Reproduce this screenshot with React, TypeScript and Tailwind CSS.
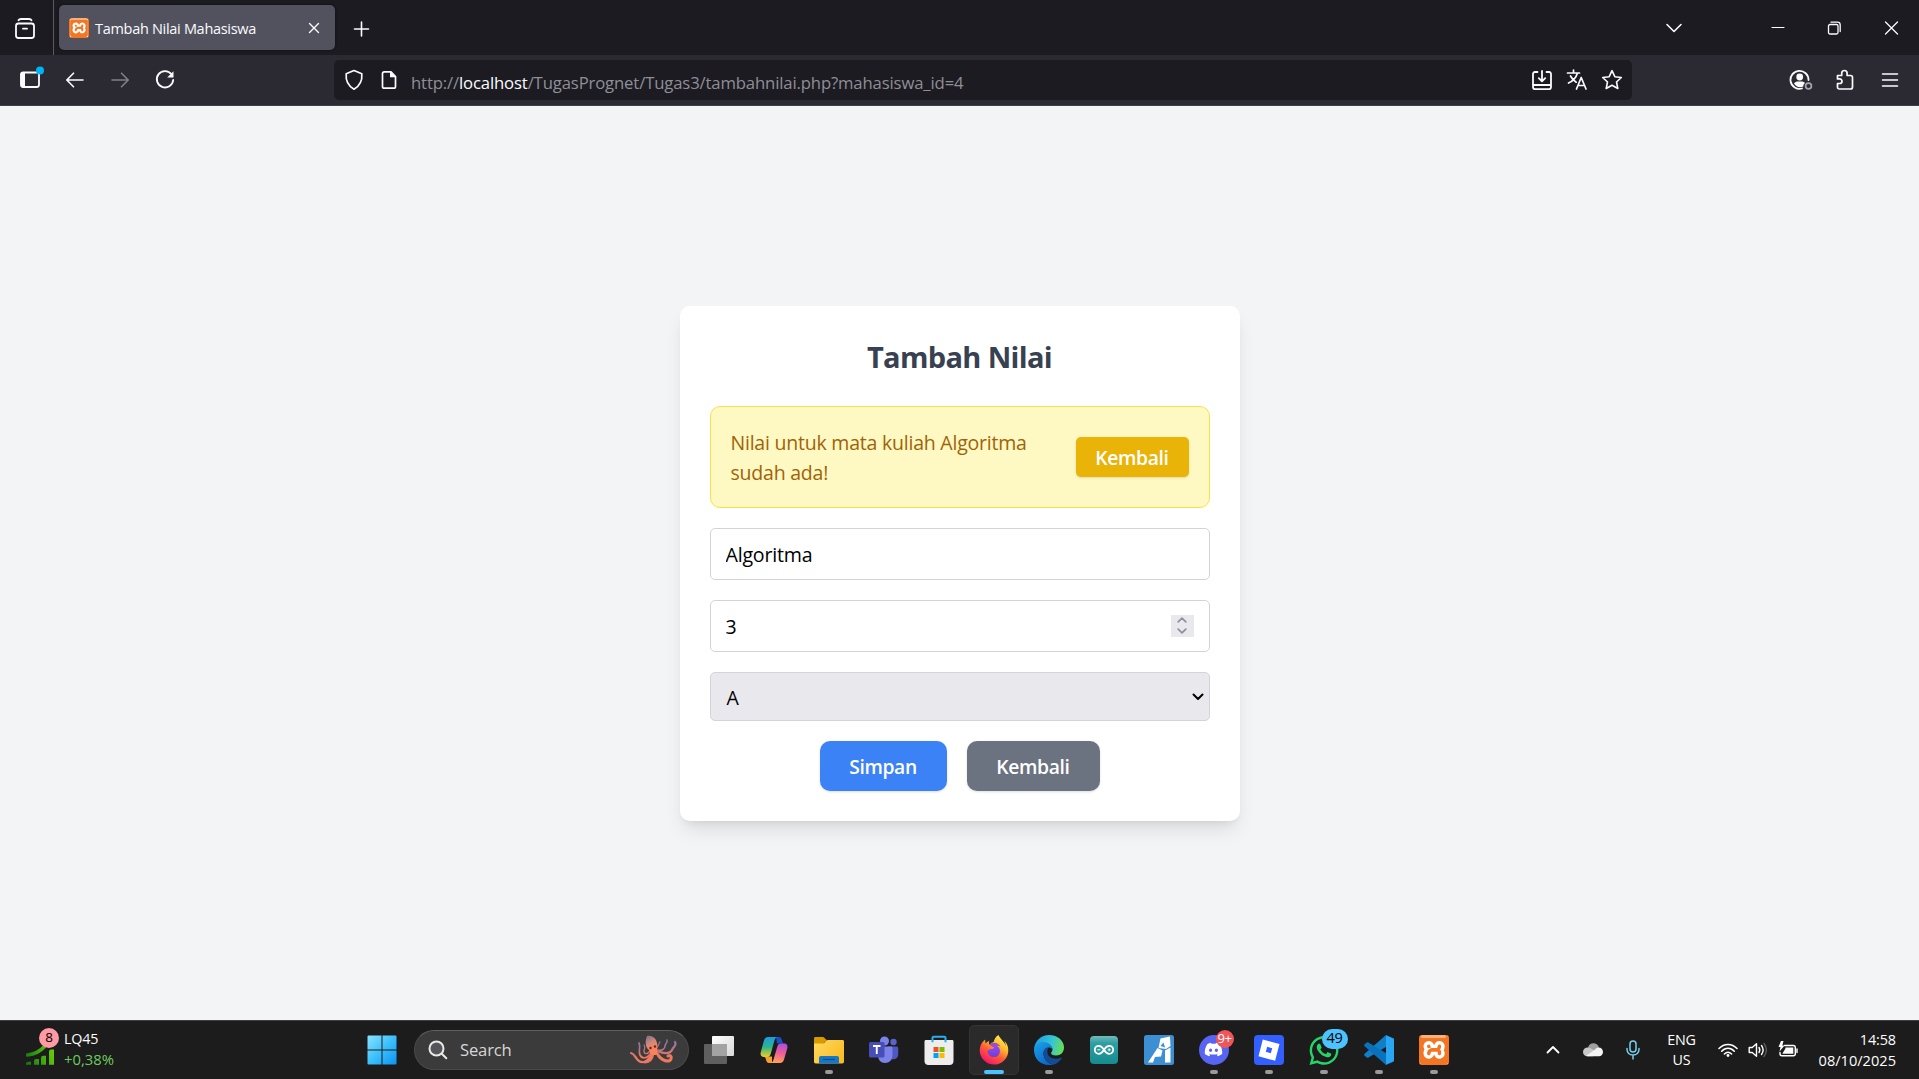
import type { ReactNode } from "react";
import { FaDiscord, FaFirefoxBrowser, FaWhatsapp } from "react-icons/fa";
import { SiXampp } from "react-icons/si";

function Stroke({ w, h, sw = 1.6, className = "", children }: { w: number; h: number; sw?: number; className?: string; children: ReactNode }) {
  return (
    <svg width={w} height={h} viewBox={`0 0 ${w} ${h}`} fill="none" stroke="currentColor" strokeWidth={sw} strokeLinecap="round" strokeLinejoin="round" className={"block shrink-0 " + className}>
      {children}
    </svg>
  );
}

function Xampp({ className }: { className: string }) {
  return (
    <span className={"relative block rounded-[3px] bg-[#f37623] p-px " + className}>
      <span className="block size-full bg-white p-px">
        <SiXampp className="size-full scale-[1.12] text-[#f37623]" />
      </span>
      <span className="absolute inset-x-[8%] top-[3%] h-[10%] rounded-sm bg-[#f9b07c]" />
    </span>
  );
}

function TabBar() {
  return (
    <div className="flex h-[55px] bg-[#1c1b22] text-[#fbfbfe]">
      <div className="flex w-[54px] items-center border-r border-[#5b5a63] pl-[14px]">
        <Stroke w={22} h={22} sw={1.8} className="mt-[2px]">
          <path d="M4.5 2.2C5 1.3 6 1 7 1h8c1 0 2 .3 2.500 1.200" />
          <rect x="2" y="5.500" width="18" height="14.500" rx="2.500" />
          <path d="M9 10.700h4" />
        </Stroke>
      </div>
      <div className="ml-[5px] mt-[5px] flex h-[45px] w-[276px] items-center rounded-[5px] bg-[#52525e] pl-[10px] shadow-[0_0_3px_rgba(0,0,0,0.6)]">
        <Xampp className="size-5" />
        <span className="ml-[6px] flex-1 pt-[2px] text-[14.500px] tracking-[-0.300px]">Tambah Nilai Mahasiswa</span>
        <Stroke w={12} h={12} sw={1.4} className="mr-[15px]">
          <path d="M1.500 1.500l9 9M10.500 1.500l-9 9" />
        </Stroke>
      </div>
      <div className="ml-[18px] flex items-center">
        <Stroke w={17} h={16} className="mt-[3px]">
          <path d="M8.500 1v14M1.500 8h14" />
        </Stroke>
      </div>
      <div className="ml-auto flex items-center pr-[20px]">
        <Stroke w={18} h={12} className="mr-[88px]">
          <path d="M2 2.500l7 7 7-7" />
        </Stroke>
        <Stroke w={14} h={14} sw={1.2} className="mr-[42px]">
          <path d="M1 6.500h12" />
        </Stroke>
        <Stroke w={15} h={14} sw={1.3} className="mr-[42px]">
          <rect x="1.500" y="3.500" width="9.500" height="9.500" rx="1.500" />
          <path d="M4 1.200h6.500c1.700 0 2.700 1 2.700 2.700V10.500" />
        </Stroke>
        <Stroke w={15} h={14} sw={1.3} className="mt-px">
          <path d="M1.500 1l12 12M13.500 1l-12 12" />
        </Stroke>
      </div>
    </div>
  );
}

function NavBar() {
  return (
    <div className="flex h-[51px] items-center border-b border-[#3f3e46] bg-[#2b2a33] text-[#fbfbfe]">
      <div className="ml-[19px] flex w-[300px] items-center">
        <Stroke w={28} h={26} sw={1.8} className="-mt-[3px]">
          <rect x="2" y="6.500" width="18" height="14.500" rx="2.200" />
          <path d="M1.500 8.500C1.500 7 2.500 6 4 6h2v15.500H4c-1.500 0-2.500-1-2.500-2.500z" fill="currentColor" stroke="none" />
          <circle cx="21" cy="4.500" r="4" fill="#00b3f4" stroke="none" />
        </Stroke>
        <Stroke w={20} h={18} className="ml-[18px]">
          <path d="M18 9H2M8.500 2.200L1.800 9l6.700 6.800" />
        </Stroke>
        <Stroke w={20} h={18} className="ml-[25px] text-[#807f88]">
          <path d="M2 9h16M11.500 2.200L18.200 9l-6.700 6.800" />
        </Stroke>
        <Stroke w={20} h={20} sw={1.8} className="ml-[25px]">
          <path d="M16.500 4.200A8.200 8.200 0 1 0 18.200 10" />
          <path d="M18.500 1.200v6.300h-6.300z" fill="currentColor" stroke="none" />
        </Stroke>
      </div>
      <div className="ml-[15px] flex h-10 w-[1298px] items-center rounded-[5px] bg-[#1c1b22] pl-[10px] pr-[9px]">
        <Stroke w={20} h={22} sw={1.7}>
          <path d="M10 1.500l7.800 3.300c.6 6.300-1.600 11.700-7.800 15.400C3.800 16.500 1.600 11.100 2.200 4.800z" />
        </Stroke>
        <Stroke w={18} h={20} sw={1.7} className="ml-4">
          <path d="M11 1.800H4.300c-1 0-1.800.8-1.800 1.800v12.800c0 1 .8 1.800 1.800 1.800h9.400c1 0 1.800-.8 1.800-1.800V6.500z" />
          <path d="M10 1l6.300 6.300H10z" fill="currentColor" stroke="none" />
        </Stroke>
        <span className="ml-[13px] flex-1 pt-[5px] text-[16.700px] tracking-[-0.140px] text-[#8f8f96]">
          http://<span className="text-[#fbfbfe]">localhost</span>/TugasPrognet/Tugas3/tambahnilai.php?mahasiswa_id=4
        </span>
        <Stroke w={22} h={22} sw={1.8} className="mt-px">
          <path d="M6.500 2H4C2.700 2 2 2.700 2 4v13c0 1.500.8 2.200 2.200 2.200h13.600c1.400 0 2.200-.7 2.200-2.200V4c0-1.300-.7-2-2-2h-2.500M2 15h18M11 1v10M7.800 8.200L11 11.400l3.200-3.200" />
        </Stroke>
        <Stroke w={22} h={22} sw={1.7} className="ml-[13px]">
          <path d="M1.500 4h12M7.500 1v3M11.500 4C10.300 8 7 12 2.500 14M4.500 7c1.300 2.500 3.200 4.700 5.700 6.200M10.500 20l4.700-11.500L20 20M12.200 16.500h6.300" />
        </Stroke>
        <Stroke w={22} h={22} sw={1.6} className="ml-[13px]">
          <path d="M11 1.700l2.800 6 6.500.8-4.800 4.500 1.300 6.500L11 16.300l-5.800 3.200L6.500 13 1.700 8.500l6.500-.8z" />
        </Stroke>
      </div>
      <div className="ml-auto flex items-center pr-[19px]">
        <Stroke w={25} h={22} sw={1.8}>
          <path d="M19.500 11A9 9 0 1 0 13 19.500" />
          <circle cx="10.700" cy="8" r="3.400" fill="currentColor" stroke="none" />
          <path d="M5 14.500c1-1.500 2.500-2 4-2h3.500c1.500 0 2.500.5 3.500 1.500-1.200 1-1.700 2-1.700 3.500-3.800 1.600-7.300.2-9.300-3z" fill="currentColor" stroke="none" />
          <circle cx="19.500" cy="17" r="2.900" stroke="#a5a4ac" strokeWidth="1.700" />
        </Stroke>
        <Stroke w={20} h={22} sw={1.7} className="ml-[21px]">
          <path d="M2.500 6.500h4.200V4.200a2.700 2.700 0 0 1 5.400 0v2.300h3.400c1.300 0 2 .7 2 2v9.500c0 1.300-.7 2-2 2h-11c-1.300 0-2-.7-2-2v-3.500h2.200a2.300 2.300 0 0 0 0-4.600H2.500z" />
        </Stroke>
        <Stroke w={18} h={16} sw={1.5} className="ml-[26px] mr-px">
          <path d="M1.500 2h15M1.500 8h15M1.500 14h15" />
        </Stroke>
      </div>
    </div>
  );
}

function FormCard() {
  return (
    <div className="h-[515px] w-[560px] rounded-[10px] bg-white p-[30px] shadow-[0_12px_19px_-4px_rgba(0,0,0,0.1),0_5px_8px_-5px_rgba(0,0,0,0.1)]">
      <h2 className="mb-[29px] pt-px text-center text-[29px] font-bold leading-10 tracking-[-0.650px] text-[#374151]">Tambah Nilai</h2>
      <div className="mb-5 flex items-center justify-between rounded-[10px] border border-[#fde047] bg-[#fef9c3] px-5 pb-[19px] pt-[21px]">
        <p className="w-[310px] text-[19.500px] leading-[30px] tracking-[-0.220px] text-[#a16207]">Nilai untuk mata kuliah Algoritma sudah ada!</p>
        <button className="-mt-px h-10 w-[113px] rounded-[5px] bg-[#eab308] pt-[3px] text-[19.300px] font-semibold tracking-[-0.350px] text-white shadow">Kembali</button>
      </div>
      <form className="flex flex-col gap-5">
        <input defaultValue="Algoritma" className="h-[52px] rounded-[5px] border border-[#d1d5db] px-[15px] pt-[2px] text-[19.600px] tracking-[-0.200px] text-black" />
        <div className="flex h-[52px] items-center rounded-[5px] border border-[#d1d5db] px-[15px]">
          <input defaultValue="3" className="min-w-0 flex-1 pt-[3px] text-[19.500px] text-black" />
          <span className="flex h-[22px] w-[23px] flex-col items-center justify-center gap-[5px] bg-[#e9e9ed] text-[#8f8f9d]">
            <Stroke w={10} h={6} sw={1.7}>
              <path d="M1.200 4.800L5 1.200l3.800 3.600" />
            </Stroke>
            <Stroke w={10} h={6} sw={1.7}>
              <path d="M1.200 1.200L5 4.800l3.800-3.600" />
            </Stroke>
          </span>
        </div>
        <div className="flex h-[49px] items-center justify-between rounded-[5px] border border-[#d1d5db] bg-[#e9e9ed] pl-[16px] pr-[5px] text-[19.500px] text-black">
          <span className="pt-[4px]">A</span>
          <Stroke w={12} h={8} sw={2} className="mt-[2px]">
            <path d="M1.500 1.500L6 6l4.500-4.500" />
          </Stroke>
        </div>
        <div className="flex justify-center gap-5">
          <button className="h-[50px] w-[127px] rounded-[10px] bg-[#3b82f6] pt-[3px] text-[19.300px] font-semibold tracking-[-0.350px] text-white shadow">Simpan</button>
          <button className="h-[50px] w-[133px] rounded-[10px] bg-[#6b7280] pt-[3px] text-[19.300px] font-semibold tracking-[-0.350px] text-white shadow">Kembali</button>
        </div>
      </form>
    </div>
  );
}

function Octopus() {
  return (
    <svg width="48" height="30" viewBox="0 0 48 30" fill="none" strokeLinecap="round" className="block">
      <defs>
        <linearGradient id="arm" x1="0" y1="0" x2="0" y2="30" gradientUnits="userSpaceOnUse">
          <stop offset="0" stopColor="#6f78b8" />
          <stop offset="0.45" stopColor="#b0748e" />
          <stop offset="0.75" stopColor="#f27a5c" />
          <stop offset="1" stopColor="#e8746a" />
        </linearGradient>
        <linearGradient id="head" x1="17" y1="1" x2="26" y2="18" gradientUnits="userSpaceOnUse">
          <stop offset="0" stopColor="#8d6f86" />
          <stop offset="0.4" stopColor="#c98a80" />
          <stop offset="0.6" stopColor="#ff8052" />
        </linearGradient>
      </defs>
      <g stroke="url(#arm)">
        <path d="M22 18C19 26 13 29 9 26 5 23 5 19 1 18" strokeWidth="2.200" />
        <path d="M21 18C17 24 12 24 10 20 8 16 11 12 9 8" strokeWidth="1.700" />
        <path d="M20 16c-3 4-6 3-6 0s2-3 0-6" strokeWidth="1.300" />
        <path d="M23 18c-1 6-4 9-8 9" strokeWidth="3" />
        <path d="M27 18c4 8 12 10 14 6 1-3-1-4-3-3" strokeWidth="3" />
        <path d="M28 16c6 3 12 3 14-1 2-5 5-4 3-8" strokeWidth="2.200" />
        <path d="M27 15c5 1 8-1 8-4s3-3 2-6" strokeWidth="1.500" />
        <path d="M26 13c3-1 2-4 4-6" strokeWidth="1.200" />
      </g>
      <path d="M17 1c5-1 9 2 10 7 1 4 0 6 0 8 1 2 1 3-1 4h-4c-2-1-2-3-3-5-4-3-4-9-2-14z" fill="url(#head)" />
      <circle cx="20.500" cy="13" r="1.200" fill="#33315a" />
      <circle cx="25" cy="11.500" r="1.200" fill="#33315a" />
    </svg>
  );
}

function Task({ children, mark = true, active = false }: { children: ReactNode; mark?: boolean; active?: boolean }) {
  return (
    <div className="relative flex h-[59px] w-[55px] items-center justify-center">
      <div className={active ? "flex size-[50px] items-center justify-center rounded-[5px] border border-[#343434] bg-[#2a2a2a]" : "flex size-[50px] items-center justify-center"}>{children}</div>
      {active ? (
        <span className="absolute bottom-[5px] left-[18px] h-1 w-5 rounded-full bg-[#4cc2ff]" />
      ) : mark ? (
        <span className="absolute bottom-[5px] left-[24px] h-1 w-2 rounded-full bg-[#9a9a9a]" />
      ) : null}
    </div>
  );
}

function Art({ children }: { children: ReactNode }) {
  return (
    <svg width="30" height="30" viewBox="0 0 30 30" fill="none" className="block">
      {children}
    </svg>
  );
}

function TaskIcons() {
  return (
    <div className="ml-0.5 flex">
      <Task mark={false}>
        <Art>
          <defs>
            <linearGradient id="tv" x1="8" y1="1" x2="30" y2="21" gradientUnits="userSpaceOnUse"><stop stopColor="#fff" /><stop offset="1" stopColor="#d8d8d8" /></linearGradient>
          </defs>
          <rect x="8" y="1" width="22" height="20" rx="1" fill="url(#tv)" />
          <rect x="0" y="9" width="23" height="20" rx="1" fill="#5f5f5f" />
          <rect x="8" y="9" width="15" height="12" fill="#a3a3a3" />
        </Art>
      </Task>
      <Task mark={false}>
        <Art>
          <defs>
            <linearGradient id="cp1" x1="6" y1="2" x2="6" y2="22" gradientUnits="userSpaceOnUse"><stop stopColor="#1c9be8" /><stop offset=".5" stopColor="#2fb38a" /><stop offset="1" stopColor="#f0cf27" /></linearGradient>
            <linearGradient id="cp2" x1="24" y1="8" x2="20" y2="28" gradientUnits="userSpaceOnUse"><stop stopColor="#a34fe3" /><stop offset=".5" stopColor="#ee5c98" /><stop offset="1" stopColor="#ffa05a" /></linearGradient>
          </defs>
          <path d="M17 2h3c2 0 2.500 1.500 3.200 4 .6 2 1.200 2.500 2.800 2.500h-8z" fill="#1550c4" />
          <path d="M13 28h-3c-2 0-2.500-1.500-3.200-4-.5-1.800-1.200-2.500-2.800-2.500h9z" fill="#f4a130" />
          <path d="M9 2h10c-2 0-3 1.500-3.700 4l-3.500 12.500c-.7 2.500-1.800 3.500-3.800 3.500H5c-3 0-4-2-3.200-5l3-11C5.500 3.500 6.800 2 9 2z" fill="url(#cp1)" />
          <path d="M21 28H11c2 0 3-1.500 3.700-4l3.500-12c.7-2.500 1.800-3.500 3.800-3.500h3c3 0 4 2 3.200 5l-3 10.500c-.7 2.500-2 4-4.200 4z" fill="url(#cp2)" />
        </Art>
      </Task>
      <Task>
        <Art>
          <defs>
            <linearGradient id="fd" x1="0" y1="5" x2="30" y2="29" gradientUnits="userSpaceOnUse"><stop stopColor="#ffda5e" /><stop offset="1" stopColor="#f9b81c" /></linearGradient>
          </defs>
          <path d="M0 3.500C0 2.500.7 2 1.500 2H9c1.500 0 2.500 3 4 3l-4 4H0z" fill="#d99a00" />
          <path d="M0 8.500h9c2 0 2.500-3.500 5-3.500h14.500c1 0 1.500.6 1.500 1.500v20c0 1.200-.6 2-1.800 2H1.800C.6 28.500 0 27.700 0 26.500z" fill="url(#fd)" />
          <path d="M5 28.500V23c0-1.200.8-2 2-2h16c1.200 0 2 .8 2 2v5.500z" fill="#1577c8" />
          <path d="M9 24.500h12" stroke="#0c4a87" strokeWidth="1.200" />
        </Art>
      </Task>
      <Task mark={false}>
        <Art>
          <circle cx="24.500" cy="7" r="3.200" fill="#5b62c8" />
          <path d="M19 11.500h8.500c1 0 1.700.7 1.700 1.700v6c0 3-2 5-5.200 5H19z" fill="#4f57c0" />
          <circle cx="15.500" cy="6" r="4.500" fill="#7b83eb" />
          <path d="M9 11.500h13c1 0 1.500.6 1.500 1.500v7c0 5-3.300 8-7.500 8s-7-3-7-8z" fill="#7b83eb" />
          <rect x="0" y="7" width="15.500" height="15.500" rx="1.500" fill="#464eb8" />
          <path d="M4 11h7.500M7.750 11v8" stroke="#fff" strokeWidth="1.900" />
        </Art>
      </Task>
      <Task mark={false}>
        <Art>
          <path d="M8.500 7V2.800c0-.7.400-1.100 1.100-1.100h10.800c.7 0 1.100.4 1.100 1.100V7" stroke="#29aef0" strokeWidth="2" />
          <path d="M.5 6.500C.5 5.700 1 5 2 5h26c1 0 1.500.7 1.500 1.500V26c0 2.500-1.500 4-4 4h-21c-2.500 0-4-1.500-4-4z" fill="#ededed" />
          <path d="M8.500 5v2.300M21.500 5v2.300" stroke="#29aef0" strokeWidth="2" />
          <rect x="9.500" y="12" width="5" height="5" fill="#f25022" />
          <rect x="15.500" y="12" width="5" height="5" fill="#7fba00" />
          <rect x="9.500" y="18" width="5" height="5" fill="#00a4ef" />
          <rect x="15.500" y="18" width="5" height="5" fill="#ffb900" />
        </Art>
      </Task>
      <Task active>
        <svg width="0" height="0" className="absolute">
          <linearGradient id="ff" x1="0.800" y1="0.050" x2="0.250" y2="0.950">
            <stop offset="0" stopColor="#fff14d" /><stop offset=".35" stopColor="#ffb02e" /><stop offset=".6" stopColor="#ff5f36" /><stop offset="1" stopColor="#f5156c" />
          </linearGradient>
        </svg>
        <span className="relative flex size-[30px] items-center justify-center">
          <span className="absolute left-[8px] top-[8px] size-[14px] rounded-full bg-gradient-to-b from-[#a24bea] to-[#6a3fe0]" />
          <FaFirefoxBrowser className="relative size-[30px]" fill="url(#ff)" />
        </span>
      </Task>
      <Task>
        <Art>
          <defs>
            <linearGradient id="e1" x1="2" y1="6" x2="30" y2="14" gradientUnits="userSpaceOnUse"><stop stopColor="#1ba3e4" /><stop offset=".55" stopColor="#36c6d3" /><stop offset="1" stopColor="#6ce04a" /></linearGradient>
            <linearGradient id="e2" x1="1" y1="10" x2="16" y2="30" gradientUnits="userSpaceOnUse"><stop stopColor="#1a9be6" /><stop offset="1" stopColor="#0a62c2" /></linearGradient>
          </defs>
          <path d="M0 14C.8 6 7 0 15 0c9 0 15 6 15 12.500 0 5-3.500 8-8 8-3.500 0-5-1.500-5-2.500 0-.8 1.500-1.500 1.500-3.500 0-3.500-4-6.500-9-6.500C5 8 1.500 10.500 0 14z" fill="url(#e1)" />
          <path d="M0 15c0-4.500 4-8 9-8 5.500 0 9.500 3.500 9.500 7.500-1-1.500-2.500-2-4-2-3 0-5 3-5 6 0 5.500 4.500 11 10.500 11-1.500.4-3.300.5-5 .5C6 30 0 23.500 0 15z" fill="url(#e2)" />
          <path d="M14.500 12.500c-3.500.5-5 3-5 6C9.500 24 14 29.500 20 29.500c3.500-1.200 6-3.500 7.700-6 .3-.6-.2-1-.8-.7-6 2.500-14 .2-13.500-6.500.1-1.500.4-2.800 1.100-3.800z" fill="#124c96" />
        </Art>
      </Task>
      <Task mark={false}>
        <Art>
          <defs>
            <linearGradient id="ar" x1="0" y1="1" x2="0" y2="29" gradientUnits="userSpaceOnUse"><stop stopColor="#73bcbd" /><stop offset=".25" stopColor="#2f9fa3" /><stop offset="1" stopColor="#158b90" /></linearGradient>
          </defs>
          <rect x="1" y="1" width="28" height="28" rx="4" fill="url(#ar)" />
          <path d="M15 14.800c-1.500-2.600-3-4-5.200-4a4 4 0 0 0 0 8c2.200 0 3.700-1.400 5.200-4 1.500-2.600 3-4 5.200-4a4 4 0 0 1 0 8c-2.200 0-3.700-1.400-5.200-4z" stroke="#fff" strokeWidth="1.800" />
          <path d="M8.300 14.800h3M18.700 14.800h3M20.200 13.300v3" stroke="#fff" strokeWidth="1" />
        </Art>
      </Task>
      <Task mark={false}>
        <Art>
          <rect width="30" height="30" rx="2.500" fill="#3c8fd2" />
          <path d="M16.500 3.500L26 1.500 26.500 11l-4.500 3-7.500-1z" fill="#fff" />
          <path d="M4 27.500L13.500 13l5 2.500-1.500 6-6 .5-2 5.500zM21 15.500l5.500-3v15H21z" fill="#fff" />
          <path d="M16.500 11l3-3.500 1.500 5z" fill="#3c8fd2" />
        </Art>
      </Task>
      <Task>
        <span className="relative flex size-[30px] items-center justify-center rounded-full bg-[#5865f2]">
          <FaDiscord className="size-[19px] text-white" />
          <span className="absolute -top-[5px] left-[17px] flex h-[18px] w-[18px] items-center justify-center rounded-full bg-[#f0555a] text-[13px] leading-none tracking-[-0.500px] text-white">9+</span>
        </span>
      </Task>
      <Task>
        <Art>
          <rect width="30" height="30" rx="4" fill="#335fff" />
          <path d="M8.800 4.500l16.700 4.500-4.400 16.700L4.500 21.300zM13.200 11.800l-1.400 5 5 1.400 1.400-5z" fill="#fff" fillRule="evenodd" />
        </Art>
      </Task>
      <Task>
        <span className="relative block size-[30px]">
          <FaWhatsapp className="size-[33px] -translate-x-[1.500px] -translate-y-px text-[#25d366]" />
          <span className="absolute -top-[6px] left-[13px] flex h-5 w-[26px] items-center justify-center rounded-full bg-[#4cc2ff] text-[14.500px] leading-none tracking-[-0.300px] text-black">49</span>
        </span>
      </Task>
      <Task>
        <Art>
          <path d="M22 0l8 3.500V7L4.500 22.500c-.6.400-1.200.4-1.700 0L.6 20.700c-.6-.6-.6-1.300 0-1.900z" fill="#0f7fc8" />
          <path d="M22 30l8-3.500V23L4.500 7.500c-.6-.4-1.200-.4-1.700 0L.6 9.300c-.6.600-.6 1.300 0 1.900z" fill="#0a72bd" />
          <path d="M21.500.3L29 3.400c.6.300 1 .8 1 1.500v20.200c0 .7-.4 1.200-1 1.500l-7.500 3.100c1-.5.5-1.700.5-2.700V3c0-1 .5-2.200-.5-2.700z" fill="#2aa7f2" />
        </Art>
      </Task>
      <Task>
        <Xampp className="size-[30px]" />
      </Task>
    </div>
  );
}

function Tray() {
  return (
    <div className="ml-auto flex items-center pr-[23px] text-white">
      <div className="flex w-[34px] justify-center">
        <Stroke w={14} h={9} sw={1.8}>
          <path d="M1.500 7.500L7 2l5.500 5.500" />
        </Stroke>
      </div>
      <div className="flex w-[46px] justify-center">
        <svg width="20" height="14" viewBox="0 0 20 14" className="block">
          <path d="M5 4.500C6 1.500 8 .3 10.300.3c3 0 5 1.700 5.700 4.200L9 9z" fill="#a0a0a0" />
          <path d="M4.500 13.200C1.800 13.200 0 11.500 0 9c0-2.600 2-4.500 4.800-4.500 1 0 2 .3 2.800.8L14 9l-4 4.200z" fill="#c8c8c8" />
          <path d="M3 13l9-6.500c1-1.300 2-2 3.500-2C18.200 4.500 20 6.500 20 9c0 2.500-1.700 4.200-4 4.200H4.500z" fill="#f4f4f4" />
        </svg>
      </div>
      <div className="flex w-[34px] justify-center text-[#76cfec]">
        <Stroke w={14} h={20} sw={1.5}>
          <rect x="4" y="1" width="6" height="11" rx="3" />
          <path d="M1 8.500v.8c0 3.300 2.500 5.700 6 5.700s6-2.400 6-5.700v-.8M7 15v4" />
        </Stroke>
      </div>
      <div className="flex w-[63px] flex-col items-center pt-px text-[14.300px] leading-5 tracking-[-0.200px]">
        <span>ENG</span>
        <span>US</span>
      </div>
      <div className="flex w-[30px] justify-center">
        <Stroke w={20} h={16} sw={1.5}>
          <path d="M1 6.500c5-5.500 13-5.500 18 0M3.700 9.300c3.600-4 9-4 12.600 0M6.400 12c2.200-2.200 5-2.200 7.200 0" />
          <circle cx="10" cy="13.500" r="1.400" fill="currentColor" stroke="none" />
        </Stroke>
      </div>
      <div className="flex w-[29px] justify-center">
        <Stroke w={20} h={16} sw={1.4}>
          <path d="M1.200 5.500h3L8.500 1.800v12.400L4.200 10.500h-3zM11 5.500c1 1.500 1 3.500 0 5M13.500 3.500c2 2.700 2 6.300 0 9" />
          <path d="M16 1.500c3 4 3 9 0 13" stroke="#5a5a5a" />
        </Stroke>
      </div>
      <div className="flex w-[32px] justify-center">
        <Stroke w={20} h={18} sw={1.4}>
          <path d="M6.500 4.500h8.800c1.200 0 2 .8 2 2v6.300c0 1.200-.8 2-2 2H4c-1.200 0-2-.8-2-2V11.500M19 8v3.500" />
          <path d="M7.500 6.500h7.800v6.300H4.300l3-5z" fill="currentColor" stroke="none" />
          <path d="M3 0L.5 6h2l-1 4.500L6.500 4.500H4.300L5.500 0z" fill="currentColor" stroke="none" />
        </Stroke>
      </div>
      <div className="flex w-[92px] flex-col items-end leading-5">
        <span className="text-[14.400px] tracking-[-0.100px]">14:58</span>
        <span className="text-[14.600px]">08/10/2025</span>
      </div>
    </div>
  );
}

function Taskbar() {
  return (
    <div className="flex h-[59px] items-center bg-[#1c1c1c] shadow-[inset_0_1px_0_#3d3f42]">
      <div className="flex w-[354px] items-center pl-[26px]">
        <div className="relative -mt-[3px]">
          <svg width="30" height="38" viewBox="0 0 30 38" fill="none" className="block">
            <defs>
              <linearGradient id="gr" x1="0" y1="30" x2="28" y2="20" gradientUnits="userSpaceOnUse"><stop stopColor="#127a12" /><stop offset="1" stopColor="#6dce0a" /></linearGradient>
            </defs>
            <path d="M1.500 26c8-1 13-4 17-8.500" stroke="url(#gr)" strokeWidth="3.600" strokeLinecap="round" />
            <path d="M0 35c0-1.500 1-2.200 2.500-2.200H5v3H0zM8 32c0-1.500 1-2 2.500-2H13v5.800H8zM15 29c0-1.500 1-2.300 2.500-2.300H20v9.100h-5zM23 22.500c0-1.200.8-2 2-2h3v15.300h-5z" fill="url(#gr)" />
          </svg>
          <span className="absolute -top-px left-[13px] flex size-5 items-center justify-center rounded-full bg-[#ff99a4] text-[13.500px] leading-none text-black">8</span>
        </div>
        <div className="-mt-px ml-2 flex flex-col leading-5">
          <span className="text-[14.300px] tracking-[-0.200px] text-white">LQ45</span>
          <span className="text-[14.800px] text-[#6ccb5f]">+0,38%</span>
        </div>
      </div>
      <div className="flex w-[55px] justify-center">
        <svg width="30" height="30" viewBox="0 0 30 30" className="mt-px block">
          <defs>
            <linearGradient id="win" x1="0" y1="0" x2="30" y2="30" gradientUnits="userSpaceOnUse"><stop stopColor="#8ce4ff" /><stop offset=".5" stopColor="#3cc0fb" /><stop offset="1" stopColor="#0b90f2" /></linearGradient>
          </defs>
          <path d="M.5 1.500a1 1 0 0 1 1-1h13v14H.5zM15.500.5h13a1 1 0 0 1 1 1v13h-14zM.5 15.500h14v14h-13a1 1 0 0 1-1-1zM15.500 15.500h14v13a1 1 0 0 1-1 1h-13z" fill="url(#win)" />
        </svg>
      </div>
      <div className="ml-[5px] mt-px flex h-10 w-[275px] items-center rounded-full border border-[#4a4a4a] border-t-[#606060] bg-[#3b3b3b] pl-[13px] pr-[10px]">
        <Stroke w={20} h={20} sw={2} className="text-[#e8e8e8]">
          <circle cx="8.500" cy="8.500" r="7" fill="#55565a" />
          <path d="M13.800 13.800l4.500 4.500" />
        </Stroke>
        <span className="ml-[12px] flex-1 text-[16.600px] tracking-[-0.150px] text-[#d6d6d6]">Search</span>
        <Octopus />
      </div>
      <TaskIcons />
      <Tray />
    </div>
  );
}

export default function App() {
  return (
    <div className="flex h-[1079px] w-[1919px] flex-col overflow-hidden bg-[#f3f4f6] font-['Open_Sans','Noto_Sans',sans-serif]">
      <TabBar />
      <NavBar />
      <main className="flex flex-1 items-center justify-center">
        <FormCard />
      </main>
      <Taskbar />
    </div>
  );
}
